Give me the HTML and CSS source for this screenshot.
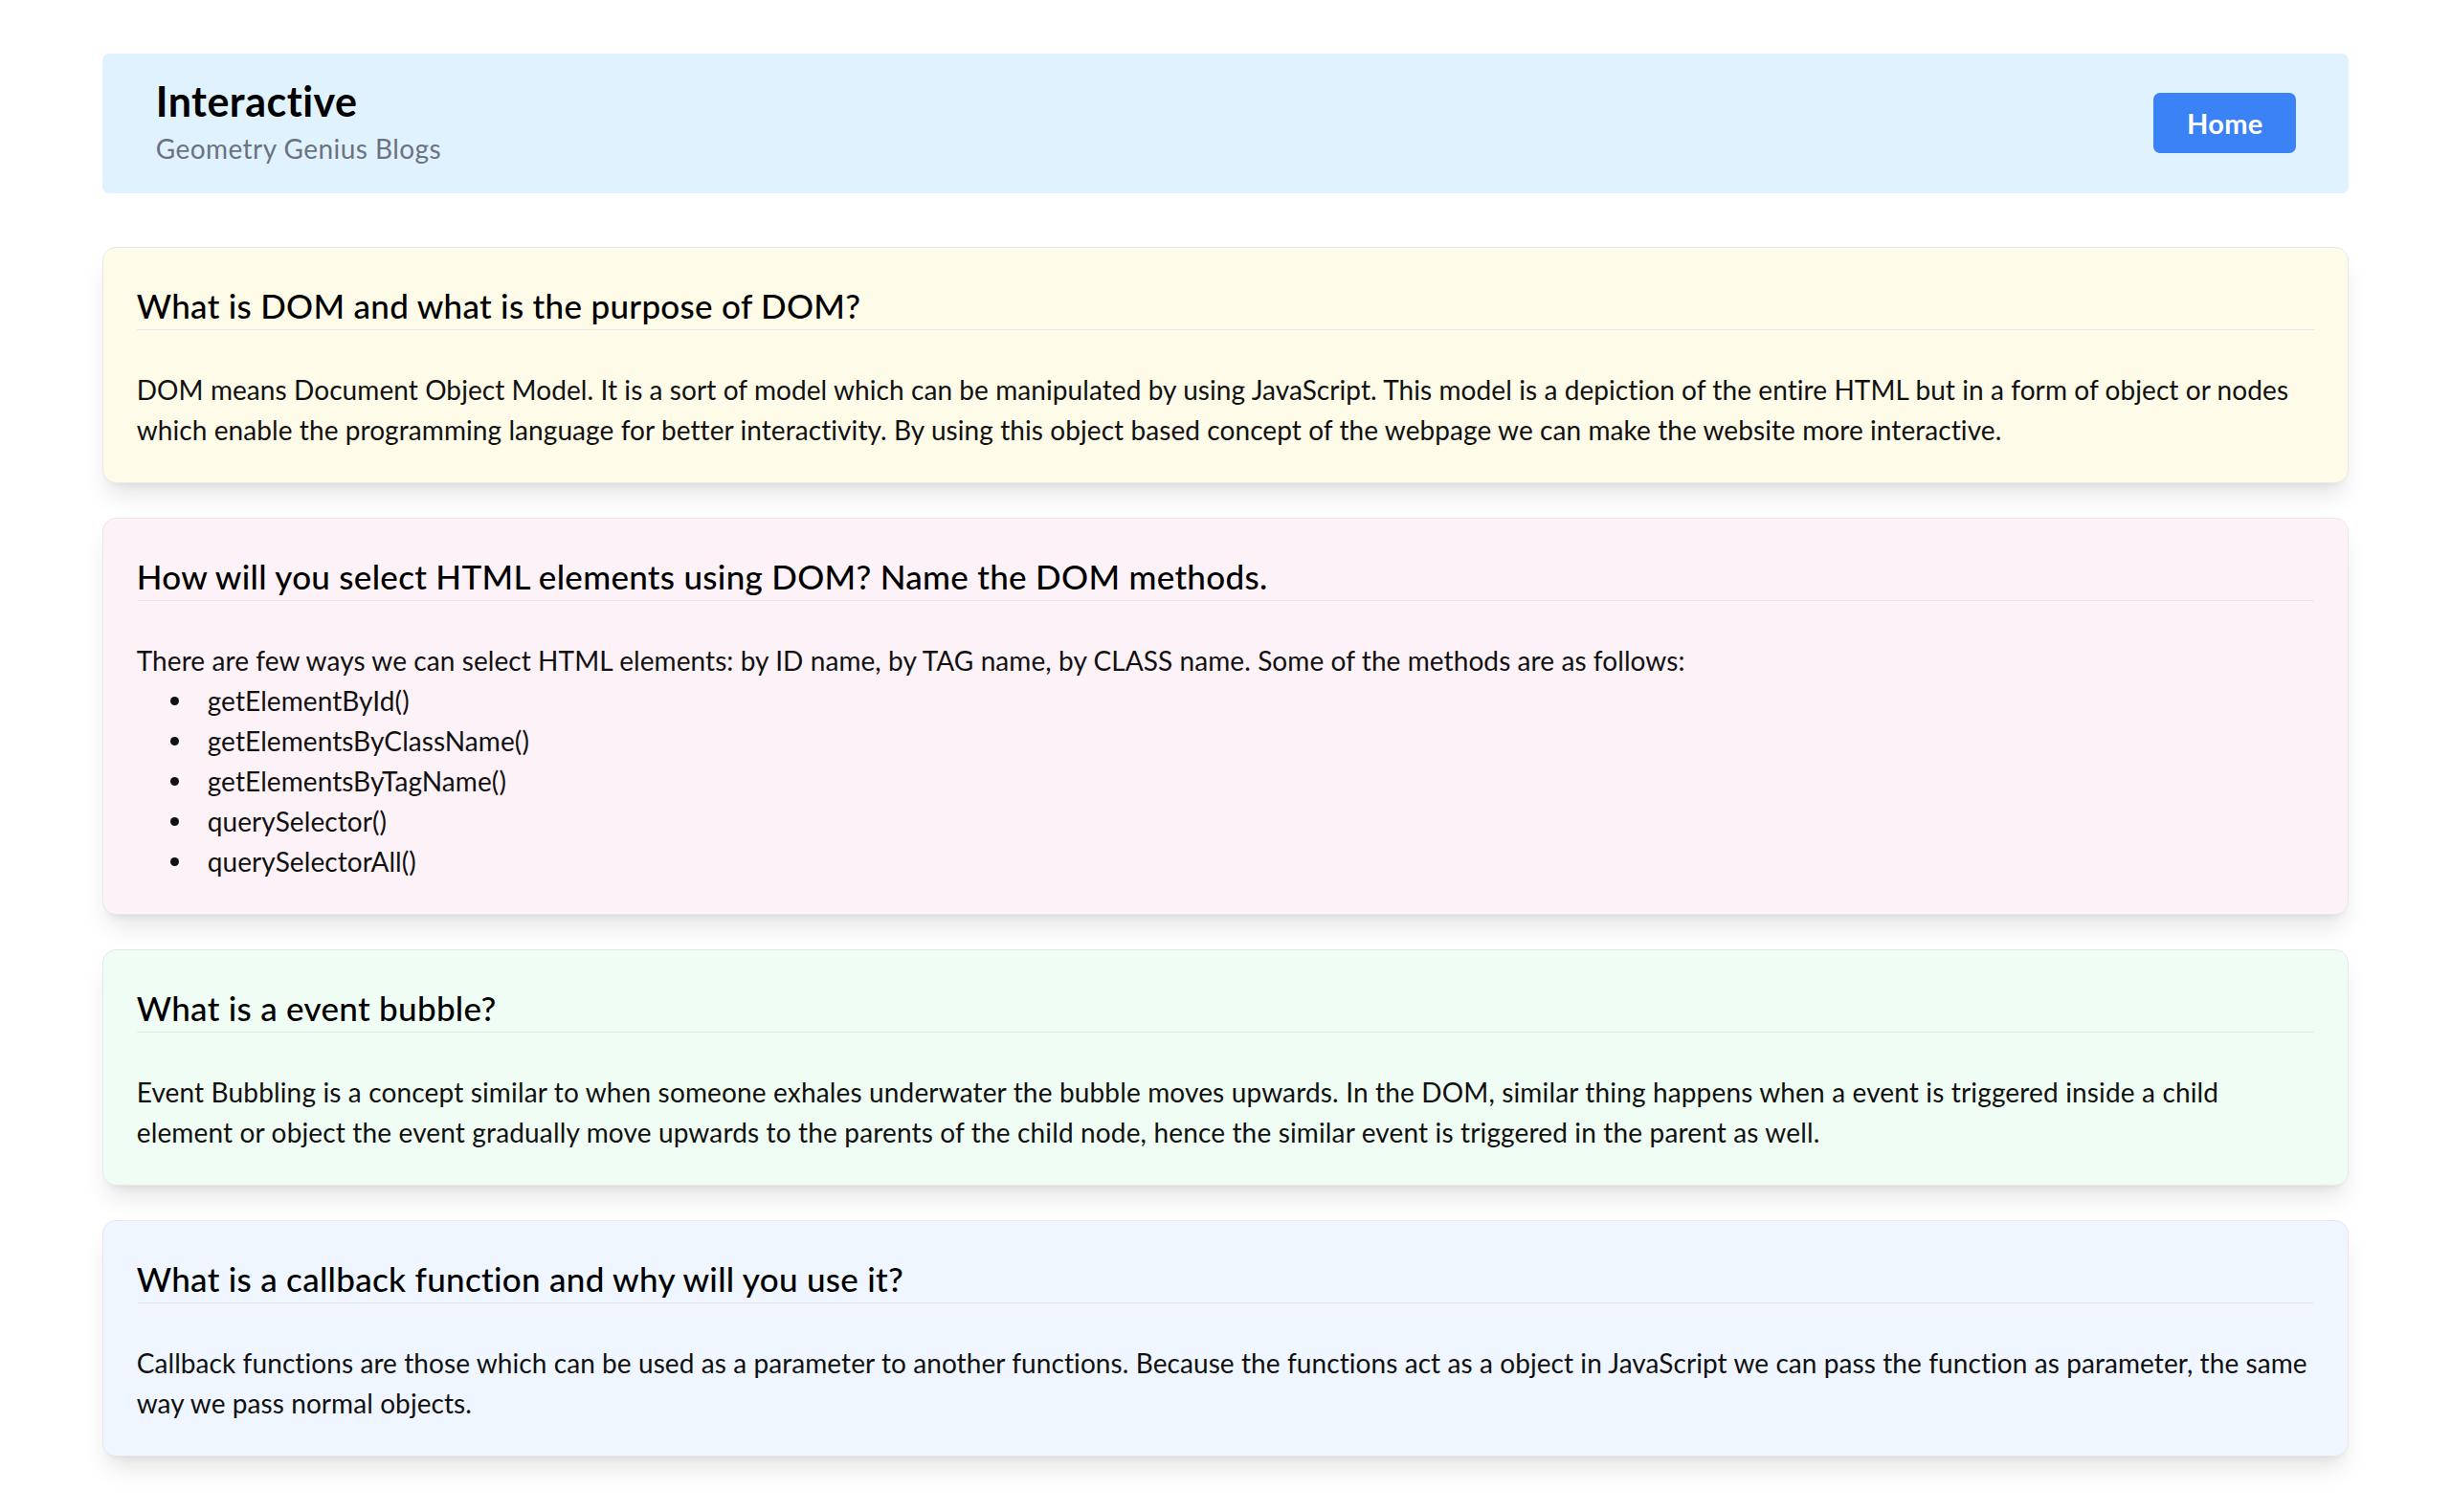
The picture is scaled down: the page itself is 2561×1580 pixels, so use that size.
FILE: index.html
```html
<!DOCTYPE html>
<html lang="en">
<head>
<meta charset="utf-8">
<title>Interactive - Geometry Genius Blogs</title>
<link rel="stylesheet" href="styles.css">
</head>
<body>
<div class="page">
  <header class="topbar">
    <div class="brand">
      <h1 class="brand-title">Interactive</h1>
      <p class="brand-sub">Geometry Genius Blogs</p>
    </div>
    <a class="home-btn" href="#">Home</a>
  </header>

  <main class="posts">
    <section class="card card-yellow">
      <h2 class="card-title">What is DOM and what is the purpose of DOM?</h2>
      <p class="card-text">DOM means Document Object Model. It is a sort of model which can be manipulated by using JavaScript. This model is a depiction of the entire HTML but in a form of object or nodes which enable the programming language for better interactivity. By using this object based concept of the webpage we can make the website more interactive.</p>
    </section>

    <section class="card card-pink">
      <h2 class="card-title">How will you select HTML elements using DOM? Name the DOM methods.</h2>
      <div class="card-text">
        <p>There are few ways we can select HTML elements: by ID name, by TAG name, by CLASS name. Some of the methods are as follows:</p>
        <ul class="method-list">
          <li>getElementById()</li>
          <li>getElementsByClassName()</li>
          <li>getElementsByTagName()</li>
          <li>querySelector()</li>
          <li>querySelectorAll()</li>
        </ul>
      </div>
    </section>

    <section class="card card-green">
      <h2 class="card-title">What is a event bubble?</h2>
      <p class="card-text">Event Bubbling is a concept similar to when someone exhales underwater the bubble moves upwards. In the DOM, similar thing happens when a event is triggered inside a child element or object the event gradually move upwards to the parents of the child node, hence the similar event is triggered in the parent as well.</p>
    </section>

    <section class="card card-blue">
      <h2 class="card-title">What is a callback function and why will you use it?</h2>
      <p class="card-text">Callback functions are those which can be used as a parameter to another functions. Because the functions act as a object in JavaScript we can pass the function as parameter, the same way we pass normal objects.</p>
    </section>
  </main>
</div>
</body>
</html>
```

FILE: styles.css
```css
* { box-sizing: border-box; }
html, body { margin: 0; padding: 0; background: #ffffff; }
body {
  font-family: "Lato", "Open Sans", "Liberation Sans", sans-serif;
  color: #111111;
}
.page {
  width: 91.6667%;
  margin: 0 auto;
  padding: 56px 0 40px;
}
.topbar {
  display: flex;
  align-items: center;
  justify-content: space-between;
  background: #e0f2fe;
  border-radius: 7px;
  padding: 22px 55px 26px 56px;
}
.brand-title {
  margin: 0;
  font-size: 43px;
  line-height: 56px;
  font-weight: 700;
  letter-spacing: 0.5px;
  color: #000;
}
.brand-sub {
  margin: 0;
  font-size: 28px;
  line-height: 42px;
  letter-spacing: 0.45px;
  color: #6b7280;
}
.home-btn {
  display: inline-flex;
  align-items: center;
  justify-content: center;
  width: 149px;
  height: 63px;
  margin-top: 2px;
  background: #3b82f6;
  color: #fff;
  font-weight: 700;
  font-size: 29px;
  letter-spacing: 0.3px;
  text-decoration: none;
  border-radius: 7px;
}
.posts {
  display: flex;
  flex-direction: column;
  gap: 36px;
  margin-top: 56px;
}
.card {
  border: 1px solid #e8e8ec;
  border-radius: 14px;
  padding: 35px 35px 34px;
  box-shadow: 0 17px 26px -5px rgba(0,0,0,0.10), 0 7px 10px -7px rgba(0,0,0,0.10);
}
.card-yellow { background: #fefbe8; }
.card-pink { background: #fdf2f8; }
.card-green { background: #f0fdf4; }
.card-blue { background: #eff6ff; }
.card-title {
  margin: 0;
  padding-top: 1px;
  font-size: 35px;
  line-height: 49px;
  font-weight: 500;
  letter-spacing: 0.3px;
  color: #000;
  border-bottom: 1px solid #e5e7eb;
}
.card-text {
  margin: 41px 0 0;
  font-size: 28px;
  line-height: 42px;
  letter-spacing: 0.08px;
  color: #111;
}
.card-green .card-text { letter-spacing: 0.15px; }
.card-text p { margin: 0; }
.method-list {
  margin: 0;
  padding-left: 35px;
  list-style: none;
}
.method-list li {
  display: flex;
  align-items: center;
}
.method-list li::before {
  content: "";
  flex: none;
  width: 9px;
  height: 9px;
  margin-right: 30px;
  border-radius: 50%;
  background: #111;
}
```
